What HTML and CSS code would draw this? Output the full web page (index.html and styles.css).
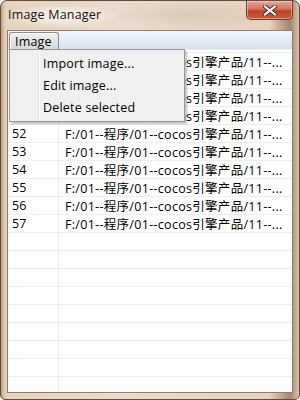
FILE: index.html
```html
<!DOCTYPE html>
<html>
<head>
    <title>Image Manager</title>
    <meta charset="utf-8">
    <link rel="stylesheet" href="styles.css">
</head>
<body>
<div class="window">
    <div class="titlebar">
        <span class="title">Image Manager</span>
        <div class="close-btn">
            <svg width="14" height="11" viewBox="0 0 14 11">
                <path d="M2 1.5 L12 9.5 M12 1.5 L2 9.5" stroke="#4a2a22" stroke-width="4" stroke-linecap="square"/>
                <path d="M2 1.5 L12 9.5 M12 1.5 L2 9.5" stroke="#ffffff" stroke-width="2.2" stroke-linecap="square"/>
            </svg>
        </div>
    </div>
    <div class="client">
        <div class="menubar">
            <span class="menu-title">Image</span>
        </div>
        <div class="list">
            <div class="col-line"></div>
            <div class="row"><span class="num">48</span><span class="path">F:/01--程序/01--cocos引擎产品/11--...</span></div>
            <div class="row"><span class="num">49</span><span class="path">F:/01--程序/01--cocos引擎产品/11--...</span></div>
            <div class="row"><span class="num">50</span><span class="path">F:/01--程序/01--cocos引擎产品/11--...</span></div>
            <div class="row"><span class="num">51</span><span class="path">F:/01--程序/01--cocos引擎产品/11--...</span></div>
            <div class="row"><span class="num">52</span><span class="path">F:/01--程序/01--cocos引擎产品/11--...</span></div>
            <div class="row"><span class="num">53</span><span class="path">F:/01--程序/01--cocos引擎产品/11--...</span></div>
            <div class="row"><span class="num">54</span><span class="path">F:/01--程序/01--cocos引擎产品/11--...</span></div>
            <div class="row"><span class="num">55</span><span class="path">F:/01--程序/01--cocos引擎产品/11--...</span></div>
            <div class="row"><span class="num">56</span><span class="path">F:/01--程序/01--cocos引擎产品/11--...</span></div>
            <div class="row"><span class="num">57</span><span class="path">F:/01--程序/01--cocos引擎产品/11--...</span></div>
            <div class="row"></div>
            <div class="row"></div>
            <div class="row"></div>
            <div class="row"></div>
            <div class="row"></div>
            <div class="row"></div>
            <div class="row"></div>
            <div class="row last"></div>
            <div class="list-foot"></div>
        </div>
        <div class="dropdown">
            <div class="item">Import image...</div>
            <div class="item">Edit image...</div>
            <div class="item">Delete selected</div>
        </div>
    </div>
</div>
</body>
</html>
```

FILE: styles.css
```css
/* Page */
body {
    margin: 0;
    font-family: "Open Sans", "Noto Sans CJK SC", sans-serif;
    font-size: 12.5px;
    letter-spacing: 0.2px;
    color: #000;
}

/* Window frame */
.window {
    position: relative;
    width: 300px;
    height: 400px;
    box-sizing: border-box;
    border: 1px solid #5e4e40;
    border-radius: 7px 7px 5px 5px;
    padding: 0 6px 6px 6px;
    display: flex;
    flex-direction: column;
    background: linear-gradient(90deg, #b89c80 0px, #e2c8ac 3px, #e8d2bc 6px, #eadccd 40%, #e6d2be 90%, #a0866c 97%, #dcc2a6 100%);
    overflow: hidden;
}

.titlebar {
    height: 29px;
    display: flex;
    align-items: center;
    background: radial-gradient(ellipse 60px 12px at 60px 15px, rgba(255, 255, 255, 0.8), rgba(255, 255, 255, 0)),
                radial-gradient(ellipse 90px 14px at 190px 14px, rgba(200, 180, 160, 0.35), rgba(255, 255, 255, 0));
    margin: 0 -6px;
    padding: 0 7px;
}

.title {
    color: #111;
    position: relative;
    top: -1px;
}

.close-btn {
    position: absolute;
    top: 0;
    right: 6px;
    width: 45px;
    height: 18px;
    border: 1px solid #6a3a30;
    border-top: none;
    border-radius: 0 0 5px 5px;
    background: linear-gradient(180deg, #e8a898 0%, #d5705c 45%, #c0401f 55%, #c85a40 100%);
    display: flex;
    align-items: center;
    justify-content: center;
    box-shadow: inset 0 0 0 1px rgba(255, 220, 210, 0.5);
}

/* Client area */
.client {
    position: relative;
    flex: 1;
    background: #fff;
    border: 1px solid #8f7c6c;
    display: flex;
    flex-direction: column;
    overflow: hidden;
}

.menubar {
    height: 18px;
    background: linear-gradient(180deg, #f4f7fc 0%, #e4ebf6 50%, #d8e1f0 100%);
    border-bottom: 1px solid #e8eef7;
    display: flex;
    align-items: stretch;
    padding-left: 1px;
}

.menu-title {
    display: flex;
    align-items: center;
    padding: 0 6px 0 5px;
    margin-top: 1px;
    border: 1px solid #8c8c8c;
    border-bottom: none;
    border-radius: 3px 3px 0 0;
    background: linear-gradient(180deg, #f0f0f0 0%, #d8d8d8 100%);
    box-shadow: inset 1px 1px 0 #fff;
}

/* Item list */
.list {
    position: relative;
    flex: 1;
    padding-top: 2px;
}

.col-line {
    position: absolute;
    top: 0;
    bottom: 0;
    left: 50px;
    border-left: 1px solid #ececec;
}

.row {
    height: 17px;
    border-top: 1px solid #eeeeee;
    display: flex;
    align-items: center;
}

.row.last {
    border-bottom: 1px solid #eeeeee;
}

.num {
    width: 51px;
    padding-left: 4px;
    box-sizing: border-box;
}

.path {
    padding-left: 6px;
    white-space: nowrap;
    letter-spacing: 0.3px;
}

.list-foot {
    margin-top: 17px;
    border-top: 1px solid #f6e8ec;
}

/* Drop-down menu */
.dropdown {
    position: absolute;
    top: 18px;
    left: 1px;
    width: 174px;
    padding: 3px 0 2px 0;
    background: #f0f0f0;
    border: 1px solid #979797;
    box-shadow: 2px 2px 2px rgba(0, 0, 0, 0.25);
    background-image: linear-gradient(90deg, transparent 28px, #e2e3e3 28px, #e2e3e3 29px, #ffffff 29px, #ffffff 30px, transparent 30px);
}

.item {
    height: 22px;
    line-height: 22px;
    padding-left: 33px;
}
```
